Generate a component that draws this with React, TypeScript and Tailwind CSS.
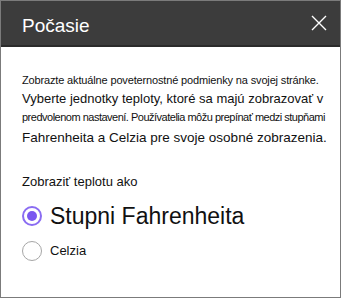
import { FC, useState } from 'react';

const Radio: FC<{ checked: boolean }> = ({ checked }) => (
  <span
    className={
      checked
        ? 'flex items-center justify-center w-[20px] h-[20px] rounded-full border-2 border-[#8a6cf2]'
        : 'flex items-center justify-center w-[20px] h-[20px] rounded-full border-[1.5px] border-[#a6a6a6]'
    }
  >
    {checked && <span className="w-[10px] h-[10px] rounded-full bg-[#7a57f0]" />}
  </span>
);

const App: FC = () => {
  const [unit, setUnit] = useState<'F' | 'C'>('F');

  return (
    <div className="w-[341px] h-[298px] border border-[#7b7b7b] bg-white flex flex-col font-['Liberation_Sans',Arial,sans-serif] text-[#111]">
      {/* Header */}
      <div className="h-[46px] bg-[#3c3c3c] border-b-2 border-[#2b2b2b] flex items-center justify-between pl-[21px] pr-[12px]">
        <h2 className="text-[19px] text-white pt-[6px]">Počasie</h2>
        <button className="text-white w-[18px] h-[18px] flex items-center justify-center">
          <svg width="16" height="16" viewBox="0 0 16 16" fill="none" stroke="currentColor" strokeWidth="1.4">
            <path d="M1 1 L15 15 M15 1 L1 15" />
          </svg>
        </button>
      </div>

      {/* Body */}
      <div className="px-[21px] pt-[24px]">
        <div className="whitespace-nowrap">
          <p className="text-[11px] leading-[18px] tracking-[-0.15px]">Zobrazte aktuálne poveternostné podmienky na svojej stránke.</p>
          <p className="text-[13px] leading-[18px] pt-[1px]">Vyberte jednotky teploty, ktoré sa majú zobrazovať v</p>
          <p className="text-[11px] leading-[18px] tracking-[-0.5px]">predvolenom nastavení. Používatelia môžu prepínať medzi stupňami</p>
          <p className="text-[13.5px] leading-[18px] pt-[3px]">Fahrenheita a Celzia pre svoje osobné zobrazenia.</p>
        </div>

        <p className="text-[13px] mt-[25px]">Zobraziť teplotu ako</p>

        <div className="flex flex-col mt-[12px] gap-[13px]">
          <label className="flex items-center gap-[8px] cursor-pointer" onClick={() => setUnit('F')}>
            <Radio checked={unit === 'F'} />
            <span className="text-[23px] leading-[24px]">Stupni Fahrenheita</span>
          </label>
          <label className="flex items-center gap-[8px] cursor-pointer" onClick={() => setUnit('C')}>
            <Radio checked={unit === 'C'} />
            <span className="text-[13px]">Celzia</span>
          </label>
        </div>
      </div>
    </div>
  );
};

export default App;
